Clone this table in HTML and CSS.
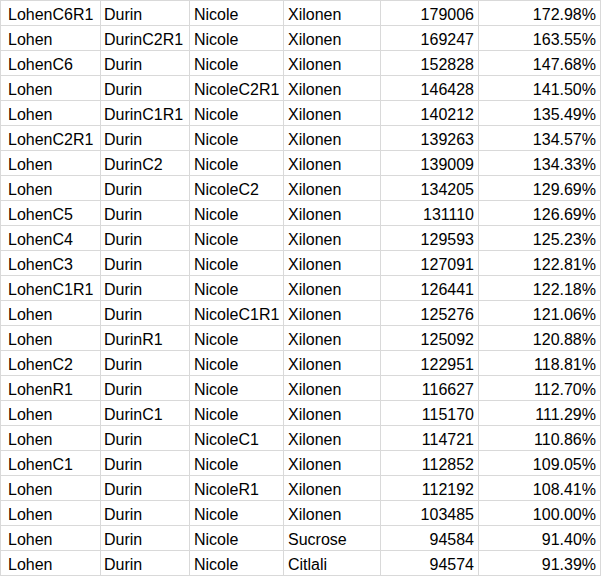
FILE: index.html
```html
<!DOCTYPE html>
<html>
<head>
<meta charset="utf-8">
<link rel="stylesheet" href="styles.css">
</head>
<body>
<div class="sheet">
<div class="c first">LohenC6R1</div><div class="c">Durin</div><div class="c mid">Nicole</div><div class="c mid">Xilonen</div><div class="c num">179006</div><div class="c num">172.98%</div>
<div class="c first">Lohen</div><div class="c">DurinC2R1</div><div class="c mid">Nicole</div><div class="c mid">Xilonen</div><div class="c num">169247</div><div class="c num">163.55%</div>
<div class="c first">LohenC6</div><div class="c">Durin</div><div class="c mid">Nicole</div><div class="c mid">Xilonen</div><div class="c num">152828</div><div class="c num">147.68%</div>
<div class="c first">Lohen</div><div class="c">Durin</div><div class="c mid">NicoleC2R1</div><div class="c mid">Xilonen</div><div class="c num">146428</div><div class="c num">141.50%</div>
<div class="c first">Lohen</div><div class="c">DurinC1R1</div><div class="c mid">Nicole</div><div class="c mid">Xilonen</div><div class="c num">140212</div><div class="c num">135.49%</div>
<div class="c first">LohenC2R1</div><div class="c">Durin</div><div class="c mid">Nicole</div><div class="c mid">Xilonen</div><div class="c num">139263</div><div class="c num">134.57%</div>
<div class="c first">Lohen</div><div class="c">DurinC2</div><div class="c mid">Nicole</div><div class="c mid">Xilonen</div><div class="c num">139009</div><div class="c num">134.33%</div>
<div class="c first">Lohen</div><div class="c">Durin</div><div class="c mid">NicoleC2</div><div class="c mid">Xilonen</div><div class="c num">134205</div><div class="c num">129.69%</div>
<div class="c first">LohenC5</div><div class="c">Durin</div><div class="c mid">Nicole</div><div class="c mid">Xilonen</div><div class="c num">131110</div><div class="c num">126.69%</div>
<div class="c first">LohenC4</div><div class="c">Durin</div><div class="c mid">Nicole</div><div class="c mid">Xilonen</div><div class="c num">129593</div><div class="c num">125.23%</div>
<div class="c first">LohenC3</div><div class="c">Durin</div><div class="c mid">Nicole</div><div class="c mid">Xilonen</div><div class="c num">127091</div><div class="c num">122.81%</div>
<div class="c first">LohenC1R1</div><div class="c">Durin</div><div class="c mid">Nicole</div><div class="c mid">Xilonen</div><div class="c num">126441</div><div class="c num">122.18%</div>
<div class="c first">Lohen</div><div class="c">Durin</div><div class="c mid">NicoleC1R1</div><div class="c mid">Xilonen</div><div class="c num">125276</div><div class="c num">121.06%</div>
<div class="c first">Lohen</div><div class="c">DurinR1</div><div class="c mid">Nicole</div><div class="c mid">Xilonen</div><div class="c num">125092</div><div class="c num">120.88%</div>
<div class="c first">LohenC2</div><div class="c">Durin</div><div class="c mid">Nicole</div><div class="c mid">Xilonen</div><div class="c num">122951</div><div class="c num">118.81%</div>
<div class="c first">LohenR1</div><div class="c">Durin</div><div class="c mid">Nicole</div><div class="c mid">Xilonen</div><div class="c num">116627</div><div class="c num">112.70%</div>
<div class="c first">Lohen</div><div class="c">DurinC1</div><div class="c mid">Nicole</div><div class="c mid">Xilonen</div><div class="c num">115170</div><div class="c num">111.29%</div>
<div class="c first">Lohen</div><div class="c">Durin</div><div class="c mid">NicoleC1</div><div class="c mid">Xilonen</div><div class="c num">114721</div><div class="c num">110.86%</div>
<div class="c first">LohenC1</div><div class="c">Durin</div><div class="c mid">Nicole</div><div class="c mid">Xilonen</div><div class="c num">112852</div><div class="c num">109.05%</div>
<div class="c first">Lohen</div><div class="c">Durin</div><div class="c mid">NicoleR1</div><div class="c mid">Xilonen</div><div class="c num">112192</div><div class="c num">108.41%</div>
<div class="c first">Lohen</div><div class="c">Durin</div><div class="c mid">Nicole</div><div class="c mid">Xilonen</div><div class="c num">103485</div><div class="c num">100.00%</div>
<div class="c first">Lohen</div><div class="c">Durin</div><div class="c mid">Nicole</div><div class="c mid">Sucrose</div><div class="c num">94584</div><div class="c num">91.40%</div>
<div class="c first">Lohen</div><div class="c">Durin</div><div class="c mid">Nicole</div><div class="c mid">Citlali</div><div class="c num">94574</div><div class="c num">91.39%</div>
</div>
</body>
</html>
```

FILE: styles.css
```css
html, body {
  margin: 0;
  padding: 0;
  background: #ffffff;
}
.sheet {
  display: grid;
  grid-template-columns: 99px 88px 93px 96px 97px 121px;
  grid-auto-rows: 24px;
  gap: 1px;
  padding: 1px;
  width: 599px;
  background: #d9d9d9;
  font-family: "Liberation Sans", Arial, sans-serif;
  font-size: 16px;
  color: #000000;
}
.c {
  background: #ffffff;
  padding: 2px 3px 0 3px;
  line-height: 24px;
  height: 22px;
  white-space: nowrap;
  overflow: hidden;
}
.c.first {
  padding-left: 7px;
}
.c.mid {
  padding-left: 4px;
}
.c.num {
  text-align: right;
  padding-right: 4px;
}
```
